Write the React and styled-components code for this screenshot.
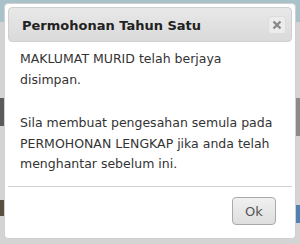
import React from "react";
import styled, { createGlobalStyle } from "styled-components";

const Global = createGlobalStyle`
  html, body { margin: 0; padding: 0; }
  body {
    width: 300px;
    height: 244px;
    overflow: hidden;
    background: #d6d6d6;
    font-family: "DejaVu Sans", Verdana, sans-serif;
  }
`;

const Stage = styled.div`
  position: relative;
  width: 300px;
  height: 244px;
  overflow: hidden;
`;

const Page = styled.div`
  display: flex;
  flex-direction: column;
  height: 100%;
  background: #d4d4d4;
`;

const PageHeader = styled.div`
  height: 22px;
  background: #a9c2ca;
`;

const PageBody = styled.div`
  flex: 1;
  display: flex;
  flex-direction: column;
  padding-top: 74px;
  gap: 64px;
`;

const PageRow = styled.div`
  display: flex;
  justify-content: space-between;
  align-items: flex-start;
  height: ${(p) => p.$h}px;
`;

const Glyph = styled.div`
  width: 4px;
  height: ${(p) => p.$h}px;
  margin-top: ${(p) => p.$top || 0}px;
  background: ${(p) => p.$color};
`;

const Dialog = styled.div`
  position: absolute;
  left: 4px;
  top: 3px;
  width: 292px;
  height: 236px;
  box-sizing: border-box;
  padding: 3px;
  background: #fff;
  border: 1px solid #d0d0d0;
  border-radius: 4px;
  display: flex;
  flex-direction: column;
`;

const TitleBar = styled.div`
  height: 35px;
  flex: none;
  box-sizing: border-box;
  display: flex;
  align-items: center;
  justify-content: space-between;
  padding: 0 5px 0 13px;
  border: 1px solid #cfcfcf;
  border-radius: 4px;
  background: linear-gradient(#e8e8e8, #dadada);
`;

const Title = styled.span`
  font-weight: bold;
  font-size: 13px;
  color: #222;
  padding-top: 1px;
`;

const CloseButton = styled.button`
  width: 18px;
  height: 18px;
  padding: 0;
  margin: 0;
  display: flex;
  align-items: center;
  justify-content: center;
  border: 1px solid #dcdcdc;
  border-radius: 3px;
  background: #ececec;
`;

const Content = styled.div`
  flex: 1;
  padding: 7px 12px 0 12px;
  font-size: 12.5px;
  line-height: 20.5px;
  color: #333;
`;

const Para = styled.p`
  margin: 0 0 ${(p) => p.$gap || 0}px 0;
`;

const ButtonPane = styled.div`
  flex: none;
  height: 49px;
  box-sizing: border-box;
  border-top: 1px solid #d2d2d2;
  display: flex;
  justify-content: flex-end;
  align-items: flex-start;
  padding: 10px 16px 0 0;
`;

const OkButton = styled.button`
  width: 44px;
  height: 28px;
  border: 1px solid #aaa;
  border-radius: 4px;
  background: linear-gradient(#f0f0f0, #dedede);
  font-family: "DejaVu Sans", Verdana, sans-serif;
  font-size: 13px;
  color: #555;
  padding: 0;
`;

export default function App() {
  return (
    <Stage>
      <Global />
      <Page>
        <PageHeader />
        <PageBody>
          <PageRow $h={40}>
            <Glyph $h={28} $top={2} $color="#5a5a5a" />
            <Glyph $h={38} $top={2} $color="#8a8a8a" />
          </PageRow>
          <PageRow $h={30}>
            <Glyph $h={16} $color="#5a5040" />
            <Glyph $h={18} $top={5} $color="#4f82b3" />
          </PageRow>
        </PageBody>
      </Page>
      <Dialog>
        <TitleBar>
          <Title>Permohonan Tahun Satu</Title>
          <CloseButton aria-label="close">
            <svg width="10" height="10" viewBox="0 0 10 10">
              <path d="M1.5 1.5 L8.5 8.5 M8.5 1.5 L1.5 8.5" stroke="#888" strokeWidth="2.4" strokeLinecap="butt" />
            </svg>
          </CloseButton>
        </TitleBar>
        <Content>
          <Para $gap={23}>MAKLUMAT MURID telah berjaya disimpan.</Para>
          <Para>
            Sila membuat pengesahan semula pada PERMOHONAN LENGKAP jika anda telah menghantar sebelum ini.
          </Para>
        </Content>
        <ButtonPane>
          <OkButton>Ok</OkButton>
        </ButtonPane>
      </Dialog>
    </Stage>
  );
}
